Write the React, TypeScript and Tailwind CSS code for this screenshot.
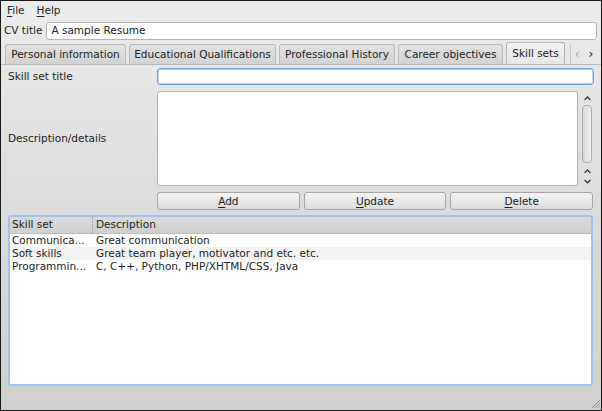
import { ReactNode } from 'react';

const tabs = [
  { label: 'Personal information', w: 'w-[121px]' },
  { label: 'Educational Qualifications', w: 'w-[147px]' },
  { label: 'Professional History', w: 'w-[116px]' },
  { label: 'Career objectives', w: 'w-[105px]' },
];

const rows = [
  { skill: 'Communica...', desc: 'Great communication' },
  { skill: 'Soft skills', desc: 'Great team player, motivator and etc. etc.' },
  { skill: 'Programmin...', desc: 'C, C++, Python, PHP/XHTML/CSS, Java' },
];

function Accel({ first, rest }: { first: string; rest: string }) {
  return (
    <span>
      <span className="underline underline-offset-2">{first}</span>
      {rest}
    </span>
  );
}

function Button({ children }: { children: ReactNode }) {
  return (
    <button className="flex h-[18px] flex-1 items-center justify-center rounded-[3px] border border-[#a5a5a5] bg-gradient-to-b from-[#f4f4f4] to-[#dcdcdc] text-[10.5px] leading-none text-[#222]">
      {children}
    </button>
  );
}

export default function App() {
  return (
    <div
      className="flex h-[411px] w-[602px] flex-col border border-[#1a1a1a] bg-gradient-to-b from-[#ececec] via-[#dcdcdc] to-[#cfcfce] text-[10.5px] text-[#232323]"
      style={{ fontFamily: '"DejaVu Sans", Verdana, sans-serif' }}
    >
      {/* menu bar */}
      <div className="flex h-[19px] items-center gap-[12px] pl-[6px]">
        <Accel first="F" rest="ile" />
        <Accel first="H" rest="elp" />
      </div>

      {/* cv title */}
      <div className="flex h-[21px] items-center gap-[4px] pl-[3px] pr-[4px]">
        <span>CV title</span>
        <div className="flex h-[18px] flex-1 items-center rounded-[3px] border border-[#b4b4b4] bg-white pl-[4px] text-[10.5px]">
          A sample Resume
        </div>
      </div>

      {/* tabs */}
      <div className="flex h-[23px] items-end gap-[3px] pl-[4px] pr-[4px]">
        {tabs.map((t) => (
          <div
            key={t.label}
            className={`flex h-[20px] items-center justify-center rounded-t-[3px] border border-b-0 border-[#b9b9b9] bg-gradient-to-b from-[#e2e2e2] to-[#d2d2d2] ${t.w}`}
          >
            {t.label}
          </div>
        ))}
        <div className="flex h-[22px] w-[59px] items-center justify-center rounded-t-[3px] border border-b-0 border-[#b4b4b4] bg-gradient-to-b from-[#f2f2f2] to-[#e6e6e6]">
          Skill sets
        </div>
        <div className="ml-[2px] flex h-[20px] flex-1 items-center justify-center gap-[9px] border-l border-[#c4c4c4] text-[12px]">
          <span className="text-[#9a9a9a]">&lsaquo;</span>
          <span className="text-[#222]">&rsaquo;</span>
        </div>
      </div>

      {/* panel */}
      <div className="flex flex-1 flex-col border-t border-[#b8b8b8] px-[7px] pt-[3px]">
        {/* skill set title */}
        <div className="flex h-[17px] items-center">
          <span className="w-[149px]">Skill set title</span>
          <div className="h-[17px] flex-1 rounded-[3px] border border-[#6f9fdc] bg-white shadow-[inset_0_0_0_1px_#b8d2f3]" />
        </div>

        {/* description */}
        <div className="mt-[6px] flex h-[95px]">
          <span className="flex w-[149px] items-center">Description/details</span>
          <div className="flex flex-1 gap-[2px]">
            <div className="flex-1 rounded-[3px] border border-[#b0b0b0] bg-white" />
            <div className="flex w-[14px] flex-col items-center text-[#333]">
              <svg width="9" height="9" viewBox="0 0 9 9" className="mt-[3px]">
                <path d="M1.5 6 L4.5 3 L7.5 6" fill="none" stroke="#333" strokeWidth="1.3" />
              </svg>
              <div className="mt-[2px] h-[60px] w-[10px] rounded-[4px] border border-[#a8a8a8] bg-gradient-to-r from-[#d9d9d9] to-[#ededed]" />
              <svg width="9" height="9" viewBox="0 0 9 9" className="mt-[4px]">
                <path d="M1.5 6 L4.5 3 L7.5 6" fill="none" stroke="#333" strokeWidth="1.3" />
              </svg>
              <svg width="9" height="9" viewBox="0 0 9 9" className="mt-[1px]">
                <path d="M1.5 3 L4.5 6 L7.5 3" fill="none" stroke="#333" strokeWidth="1.3" />
              </svg>
            </div>
          </div>
        </div>

        {/* buttons */}
        <div className="mt-[6px] flex gap-[4px] pl-[149px] pr-[1px]">
          <Button>
            <Accel first="A" rest="dd" />
          </Button>
          <Button>
            <Accel first="U" rest="pdate" />
          </Button>
          <Button>
            <Accel first="D" rest="elete" />
          </Button>
        </div>

        {/* tree view */}
        <div className="mt-[5px] mr-[1px] flex h-[171px] flex-col rounded-[3px] border-2 border-[#9fc3ee] bg-white">
          <div className="flex h-[17px] items-center border-b border-[#bdbdbd] bg-gradient-to-b from-[#dadada] to-[#cfcfcf]">
            <div className="w-[83px] border-r border-dotted border-[#9a9a9a] pl-[2px]">Skill set</div>
            <div className="pl-[3px]">Description</div>
          </div>
          {rows.map((r, i) => (
            <div
              key={r.skill}
              className={`flex h-[13px] items-center leading-none ${i === 1 ? 'bg-[#f3f3f3]' : 'bg-white'}`}
            >
              <div className="w-[84px] pl-[2px]">{r.skill}</div>
              <div className="pl-[2px]">{r.desc}</div>
            </div>
          ))}
        </div>

        {/* resize grip */}
        <div className="mt-auto flex justify-end pb-[1px]">
          <svg width="11" height="11" viewBox="0 0 11 11" className="-mr-[7px]">
            <path d="M10 2 L2 10 M10 5 L5 10 M10 8 L8 10" stroke="#8a8a8a" strokeWidth="1" />
          </svg>
        </div>
      </div>
    </div>
  );
}
